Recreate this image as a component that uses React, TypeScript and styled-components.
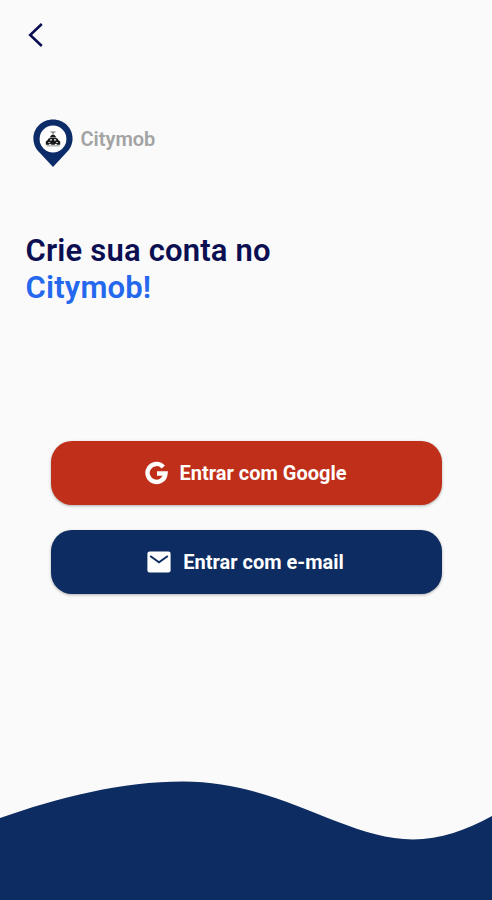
import React from "react";
import styled, { createGlobalStyle } from "styled-components";

const GlobalStyle = createGlobalStyle`
  * { box-sizing: border-box; }
  body { margin: 0; background: #fafafa; }
`;

const Screen = styled.main`
  display: flex;
  flex-direction: column;
  width: 100%;
  height: 900px;
  overflow: hidden;
  background: #fafafa;
  font-family: Roboto, "Liberation Sans", sans-serif;
`;

const TopBar = styled.header`
  height: 70px;
  padding: 21px 0 0 26px;
`;

const BackButton = styled.button`
  display: block;
  padding: 0;
  border: 0;
  background: none;
  svg { display: block; }
`;

const Brand = styled.div`
  display: flex;
  align-items: flex-start;
  height: 48px;
  margin-top: 49px;
  padding-left: 33px;
  gap: 7.5px;
`;

const BrandName = styled.span`
  color: #a3a3a3;
  font-size: 20px;
  font-weight: 600;
  line-height: 40px;
`;

const Title = styled.h1`
  margin: 65px 0 0 25.5px;
  color: #0b0f52;
  font-size: 31px;
  font-weight: 600;
  line-height: 37px;
  letter-spacing: 0.19px;
`;

const Accent = styled.span`
  display: block;
  color: #2468ee;
`;

const Actions = styled.div`
  display: flex;
  flex-direction: column;
  gap: 25px;
  margin: 135px 50px 0 51px;
`;

const ActionButton = styled.button<{ $color: string; $gap: number }>`
  display: flex;
  align-items: center;
  justify-content: center;
  gap: ${(p) => p.$gap}px;
  height: 64px;
  padding: 0 2px 0 0;
  border: 0;
  border-radius: 21px;
  background: ${(p) => p.$color};
  box-shadow: 0 1px 3px rgba(0, 0, 0, 0.3);
  color: #fff;
  font-family: inherit;
  font-size: 20px;
  font-weight: 700;
`;

const Wave = styled.svg`
  display: block;
  width: 100%;
  height: 120px;
  margin-top: auto;
  flex: none;
`;

export default function App() {
  return (
    <>
      <GlobalStyle />
      <Screen>
        <TopBar>
          <BackButton aria-label="Voltar">
            <svg width="20" height="28" viewBox="0 0 20 28" fill="none" stroke="#0b0f52" strokeWidth="2.6">
              <path d="M15.8 3 4.2 14 15.8 25" />
            </svg>
          </BackButton>
        </TopBar>
        <Brand>
          <svg width="40" height="48" viewBox="0 0 40 48">
            <path d="M20 .5C9 .5.4 9 .4 19.5c0 5.6 2.4 10.6 6.6 14.5L20 48l13-14c4.2-3.9 6.6-8.9 6.6-14.5C39.6 9 31 .5 20 .5Z" fill="#0c2b69" />
            <circle cx="20" cy="20" r="13.4" fill="#fff" />
            <path d="M17.5 12.5h5v1h-1.900v2.700h-1.200v-2.700h-1.900z" fill="#15171a" opacity=".65" />
            <g fill="#15171a">
              <path d="M18.500 16h3l2 2.400h-7z" />
              <path d="M14.500 21.300c.5-1.600 1.500-2.300 3-2.300h5c1.500 0 2.500.7 3 2.300l1.700 1.200v3.300h-3.200l-1-1.300-1.500 1.300h-3L17 24.500l-1 1.300h-3.200v-3.300z" />
              <path d="M13.500 26.500h13v.8h-13z" opacity=".6" />
            </g>
            <path d="M17.300 20.300h1.800l-.4 1.300h-2zM21 20.300h1.800l.5 1.300H21zM15.200 23.200h2v.8h-2zM23 23.200h2v.8h-2z" fill="#fff" />
          </svg>
          <BrandName>Citymob</BrandName>
        </Brand>
        <Title>
          Crie sua conta no
          <Accent>Citymob!</Accent>
        </Title>
        <Actions>
          <ActionButton $color="#c02f19" $gap={11}>
            <svg width="24" height="24" viewBox="0 0 24 24" fill="none" stroke="#fff" strokeWidth="4.4">
              <path d="M18.300 6A9 9 0 1 0 20.500 12.500H12" />
            </svg>
            Entrar com Google
          </ActionButton>
          <ActionButton $color="#0d2c61" $gap={12}>
            <svg width="24" height="22" viewBox="0 0 24 22">
              <rect x=".4" y=".5" width="23.200" height="21" rx="2.200" fill="#fff" />
              <path d="m3.200 5 8.800 6.200L20.800 5" fill="none" stroke="#0d2c61" strokeWidth="2" />
            </svg>
            Entrar com e-mail
          </ActionButton>
        </Actions>
        <Wave viewBox="0 0 492 120" preserveAspectRatio="none" aria-hidden="true">
          <path
            d="M0 38C60 17 122 1.500 183 1.500C280 1.500 345 59.500 413 59.500C440 59.500 467 50 492 36V120H0Z"
            fill="#0d2c61"
          />
        </Wave>
      </Screen>
    </>
  );
}
